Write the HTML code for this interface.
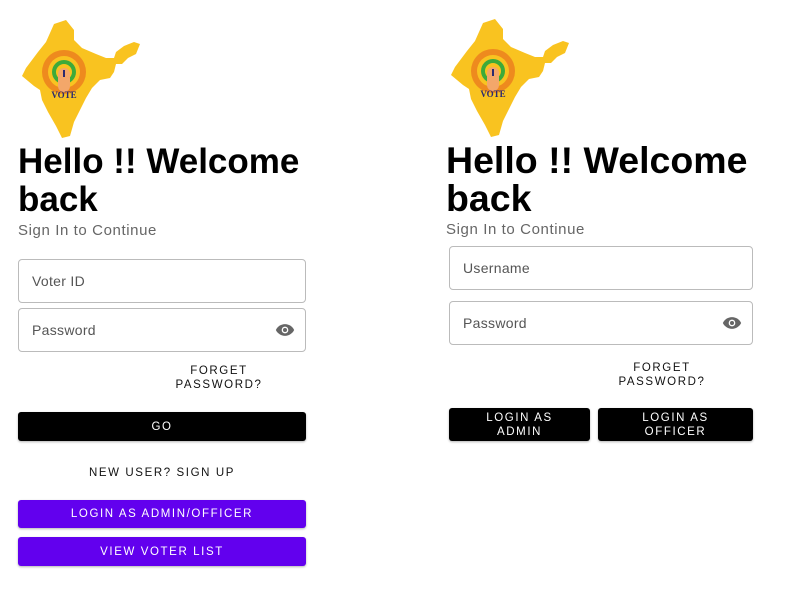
<!DOCTYPE html>
<html><head><meta charset="utf-8"><style>
*{margin:0;padding:0;box-sizing:border-box}
body{width:786px;height:612px;background:#fff;position:relative;font-family:"Liberation Sans",sans-serif;overflow:hidden}
.a{position:absolute}
h1{position:absolute;font-size:35px;font-weight:bold;line-height:38px;color:#000;letter-spacing:0}
.sub{position:absolute;font-size:15px;color:#666;letter-spacing:0.6px}
.inp{position:absolute;border:1px solid #bbb;border-radius:4px;font-size:14px;color:#555;padding-left:13px;display:flex;align-items:center;letter-spacing:0.3px}
.fg{position:absolute;font-size:11.5px;letter-spacing:1.6px;text-align:center;line-height:14px;color:#111}
.btn{position:absolute;border-radius:3px;color:#fff;font-size:11.5px;letter-spacing:1.6px;display:flex;align-items:center;justify-content:center;text-align:center;line-height:14px;box-shadow:0 1px 2px rgba(0,0,0,.3)}
.eye{position:absolute;right:10px;top:50%;margin-top:-8px}
</style></head><body>

<svg class="a" style="left:18px;top:18px" width="124" height="122" viewBox="0 0 124 122">
<path d="M36 6 L48 2 L56 12 L56 22 L64 30 L78 36 L88 40 L96 40 L98 34 L106 28 L116 24 L122 26 L118 36 L110 40 L104 46 L98 46 L96 54 L92 60 L82 62 L74 70 L68 80 L62 92 L56 104 L52 118 L44 120 L38 108 L30 94 L24 82 L22 72 L16 68 L4 58 L8 50 L14 42 L20 34 L28 24 Z" fill="#f9c320"/>
<circle cx="46" cy="54" r="22" fill="#ee8a1e"/><circle cx="46" cy="54" r="16" fill="#f9c320"/>
<circle cx="46" cy="54" r="12" fill="#3daa3a"/><circle cx="46" cy="54" r="8" fill="#f9c320"/>
<rect x="40" y="50" width="12" height="24" rx="6" fill="#f3a76a"/>
<rect x="45" y="52" width="2" height="7" fill="#2a2a70"/>
<text x="46" y="80" font-family="Liberation Serif,serif" font-weight="bold" font-size="9" fill="#2a2a70" text-anchor="middle">VOTE</text>
</svg>

<svg class="a" style="left:447px;top:17px" width="124" height="122" viewBox="0 0 124 122">
<path d="M36 6 L48 2 L56 12 L56 22 L64 30 L78 36 L88 40 L96 40 L98 34 L106 28 L116 24 L122 26 L118 36 L110 40 L104 46 L98 46 L96 54 L92 60 L82 62 L74 70 L68 80 L62 92 L56 104 L52 118 L44 120 L38 108 L30 94 L24 82 L22 72 L16 68 L4 58 L8 50 L14 42 L20 34 L28 24 Z" fill="#f9c320"/>
<circle cx="46" cy="54" r="22" fill="#ee8a1e"/><circle cx="46" cy="54" r="16" fill="#f9c320"/>
<circle cx="46" cy="54" r="12" fill="#3daa3a"/><circle cx="46" cy="54" r="8" fill="#f9c320"/>
<rect x="40" y="50" width="12" height="24" rx="6" fill="#f3a76a"/>
<rect x="45" y="52" width="2" height="7" fill="#2a2a70"/>
<text x="46" y="80" font-family="Liberation Serif,serif" font-weight="bold" font-size="9" fill="#2a2a70" text-anchor="middle">VOTE</text>
</svg>

<h1 style="left:18px;top:143px">Hello !! Welcome<br>back</h1>
<div class="sub" style="left:18px;top:222px">Sign In to Continue</div>
<div class="inp" style="left:18px;top:259px;width:288px;height:44px">Voter ID</div>
<div class="inp" style="left:18px;top:308px;width:288px;height:44px">Password
<svg class="eye" width="20" height="16" viewBox="0 0 24 16"><path d="M12 1C7 1 3 4 1 8c2 4 6 7 11 7s9-3 11-7c-2-4-6-7-11-7z" fill="#666"/><circle cx="12" cy="8" r="4" fill="#fff"/><circle cx="12" cy="8" r="2.4" fill="#666"/></svg></div>
<div class="fg" style="left:160px;top:364px;width:118px">FORGET<br>PASSWORD?</div>
<div class="btn" style="left:18px;top:412px;width:288px;height:29px;background:#000">GO</div>
<div class="fg" style="left:18px;top:466px;width:288px">NEW USER? SIGN UP</div>
<div class="btn" style="left:18px;top:500px;width:288px;height:28px;background:#6200ee">LOGIN AS ADMIN/OFFICER</div>
<div class="btn" style="left:18px;top:537px;width:288px;height:29px;background:#6200ee">VIEW VOTER LIST</div>

<h1 style="left:446px;top:141px;font-size:37.5px">Hello !! Welcome<br>back</h1>
<div class="sub" style="left:446px;top:221px">Sign In to Continue</div>
<div class="inp" style="left:449px;top:246px;width:304px;height:44px">Username</div>
<div class="inp" style="left:449px;top:301px;width:304px;height:44px">Password
<svg class="eye" width="20" height="16" viewBox="0 0 24 16"><path d="M12 1C7 1 3 4 1 8c2 4 6 7 11 7s9-3 11-7c-2-4-6-7-11-7z" fill="#666"/><circle cx="12" cy="8" r="4" fill="#fff"/><circle cx="12" cy="8" r="2.4" fill="#666"/></svg></div>
<div class="fg" style="left:603px;top:361px;width:118px">FORGET<br>PASSWORD?</div>
<div class="btn" style="left:449px;top:408px;width:141px;height:33px;background:#000">LOGIN AS<br>ADMIN</div>
<div class="btn" style="left:598px;top:408px;width:155px;height:33px;background:#000">LOGIN AS<br>OFFICER</div>
</body></html>
